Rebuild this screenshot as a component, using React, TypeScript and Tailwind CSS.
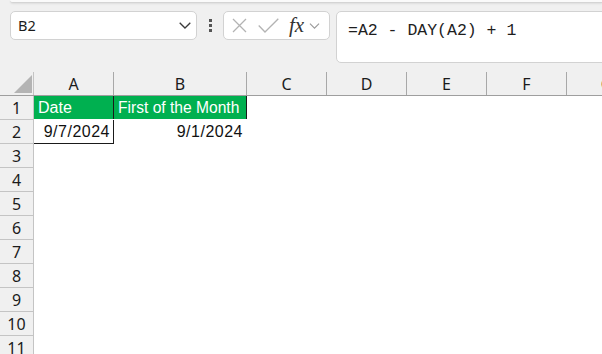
import React from 'react';

const cols = [
  { name: 'A', w: 'w-[80px]' },
  { name: 'B', w: 'w-[133px]' },
  { name: 'C', w: 'w-[80px]' },
  { name: 'D', w: 'w-[80px]' },
  { name: 'E', w: 'w-[80px]' },
  { name: 'F', w: 'w-[80px]' },
  { name: 'G', w: 'w-[80px]' },
];

const ui = { fontFamily: '"Noto Sans", "Open Sans", sans-serif' };
const cell = { fontFamily: '"Liberation Sans", Arial, sans-serif' };

function Chevron({ className, color }: { className: string; color: string }) {
  return (
    <svg className={className} viewBox="0 0 12 7" fill="none">
      <path d="M0.7 0.7 L6 6 L11.3 0.7" stroke={color} strokeWidth="1.3" />
    </svg>
  );
}

function FormulaBar() {
  return (
    <div className="h-[72px] overflow-hidden bg-[#f0f0f0]">
      <div className="ml-[10px] h-[3px] rounded-bl-[4px] border-b border-[#d4d4d4] bg-[#fafafa] shadow-[0_1px_2px_rgba(0,0,0,0.08)]" />
      <div className="flex items-start pl-[10px] pt-[8px]">
        <div className="flex h-[29px] w-[187px] shrink-0 items-center justify-between rounded-[5px] border border-[#d2d2d2] bg-white pl-[7px] pr-[5px]">
          <span className="text-[14.5px] text-[#1b1b1b]" style={ui}>
            B2
          </span>
          <Chevron className="h-[7px] w-[12px]" color="#3a3a3a" />
        </div>
        <div className="flex h-[29px] w-[26px] shrink-0 flex-col items-center justify-center gap-[2px] pl-[1px]">
          <span className="h-[3px] w-[3px] bg-[#555]" />
          <span className="h-[3px] w-[3px] bg-[#555]" />
          <span className="h-[3px] w-[3px] bg-[#555]" />
        </div>
        <div className="flex h-[29px] w-[107px] shrink-0 items-center rounded-[5px] border border-[#d2d2d2] bg-white pl-[8px]">
          <svg className="h-[15px] w-[15px] shrink-0" viewBox="0 0 15 15" fill="none">
            <path d="M1 1 L14 14 M14 1 L1 14" stroke="#b3b3b3" strokeWidth="1.3" />
          </svg>
          <svg className="ml-[11px] h-[15px] w-[21px] shrink-0" viewBox="0 0 21 15" fill="none">
            <path d="M0.7 7.5 L7 14 L20.3 0.7" stroke="#b3b3b3" strokeWidth="1.3" />
          </svg>
          <span
            className="ml-[10px] text-[21px] italic leading-none text-[#333]"
            style={{ fontFamily: '"Liberation Serif", "DejaVu Serif", serif' }}
          >
            fx
          </span>
          <Chevron className="ml-[5px] h-[6px] w-[11px] shrink-0" color="#9a9a9a" />
        </div>
        <div className="ml-[6px] h-[52px] w-[290px] shrink-0 rounded-[5px] border border-[#d2d2d2] bg-white pl-[11px] pt-[5px]">
          <span
            className="whitespace-pre text-[16.5px] text-[#1e1e1e]"
            style={{ fontFamily: '"Liberation Mono", "DejaVu Sans Mono", monospace' }}
          >
            =A2 - DAY(A2) + 1
          </span>
        </div>
      </div>
    </div>
  );
}

function HeaderRow() {
  return (
    <div className="flex h-[24px] border-b border-[#9e9e9e] bg-[#f0f0f0]">
      <div className="relative w-[34px] shrink-0 border-r border-[#c4c4c4]">
        <svg className="absolute bottom-[2px] right-[1px] h-[18px] w-[18px]" viewBox="0 0 18 18">
          <polygon points="18,0 18,18 0,18" fill="#b4b4b4" />
        </svg>
      </div>
      {cols.map((c) => (
        <div
          key={c.name}
          className={`${c.w} flex shrink-0 items-center justify-center border-r border-[#a8a8a8] text-[16px] text-[#1b1b1b]`}
          style={ui}
        >
          {c.name}
        </div>
      ))}
    </div>
  );
}

function RowHead({ n }: { n: number }) {
  return (
    <div
      className="flex w-[34px] shrink-0 items-center justify-center border-r border-b border-[#c4c4c4] bg-[#f0f0f0] text-[16px] text-[#1b1b1b]"
      style={ui}
    >
      {n}
    </div>
  );
}

export default function App() {
  const rest = [3, 4, 5, 6, 7, 8, 9, 10, 11];
  return (
    <div className="h-[354px] w-[602px] overflow-hidden bg-white">
      <FormulaBar />
      <HeaderRow />

      <div className="flex h-[24px]">
        <RowHead n={1} />
        <div
          className="flex h-[23px] w-[80px] shrink-0 items-center border-r border-[#1a1a1a] bg-[#00b050] pl-[4px] text-[16px] text-white"
          style={cell}
        >
          Date
        </div>
        <div
          className="flex h-[23px] w-[133px] shrink-0 items-center whitespace-nowrap border-r border-[#1a1a1a] bg-[#00b050] pl-[4px] text-[15.6px] text-white"
          style={cell}
        >
          First of the Month
        </div>
      </div>

      <div className="flex h-[24px]">
        <RowHead n={2} />
        <div
          className="flex h-[24px] w-[80px] shrink-0 items-center justify-end border-r border-b border-[#1a1a1a] pr-[3px] text-[16px] tracking-[0.5px] text-[#111]"
          style={cell}
        >
          9/7/2024
        </div>
        <div
          className="flex h-[23px] w-[133px] shrink-0 items-center justify-end pr-[4px] text-[16px] tracking-[0.5px] text-[#111]"
          style={cell}
        >
          9/1/2024
        </div>
      </div>

      {rest.map((n) => (
        <div key={n} className="flex h-[24px]">
          <RowHead n={n} />
        </div>
      ))}
    </div>
  );
}
